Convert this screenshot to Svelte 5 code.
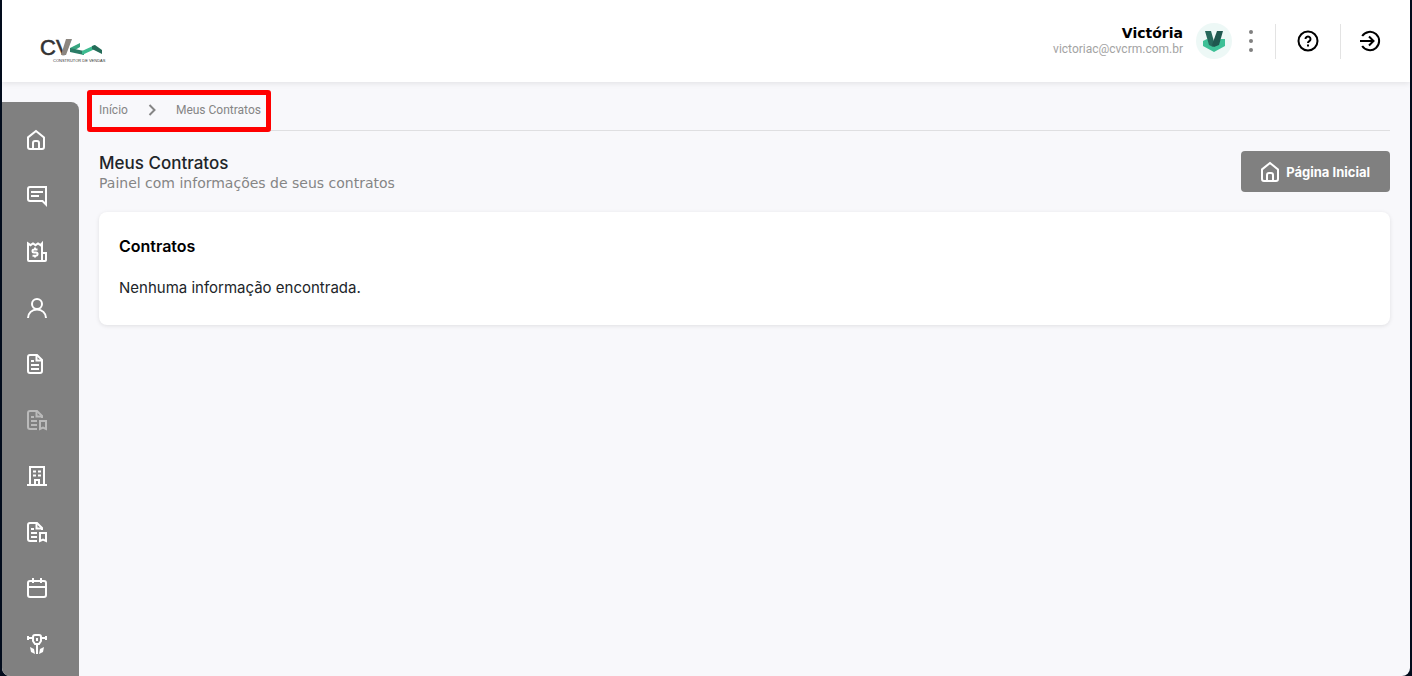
<script>
  const user = {
    name: 'Victória',
    email: 'victoriac@cvcrm.com.br',
  };

  const menu = [
    { id: 'home', label: 'Início' },
    { id: 'messages', label: 'Mensagens' },
    { id: 'finance', label: 'Financeiro' },
    { id: 'profile', label: 'Meus dados' },
    { id: 'documents', label: 'Documentos' },
    { id: 'contracts', label: 'Meus Contratos', active: true },
    { id: 'building', label: 'Empreendimentos' },
    { id: 'contracts', label: 'Termos' },
    { id: 'calendar', label: 'Agendamentos' },
    { id: 'works', label: 'Obras' },
  ];

  let contratos = $state([]);
</script>

{#snippet icon(id)}
  <svg class="icon" viewBox="0 0 20 20" width="20" height="20" aria-hidden="true">
    {#if id === 'home'}
      <path d="M1 7.4 9 1l8 6.4V17a2 2 0 0 1-2 2H3a2 2 0 0 1-2-2z" />
      <path d="M6 19v-6a2 2 0 0 1 2-2h2a2 2 0 0 1 2 2v6" />
    {:else if id === 'messages'}
      <path d="M19 18.5 15.5 15H3a2 2 0 0 1-2-2V3a2 2 0 0 1 2-2h16z" />
      <path d="M4 6h12M4 10h8" />
    {:else if id === 'finance'}
      <path d="M1 18V1.500l2.500 1.700L6 1.500l2.500 1.700L11 1.500l2.500 1.700L15 1.500V19H2a1 1 0 0 1-1-1z" />
      <path d="M15 11h4v7a1 1 0 0 1-1 1h-3" />
      <path d="M10.500 7.500H7a1.500 1.500 0 0 0 0 3h2a1.500 1.500 0 0 1 0 3.200H5.500M8 5.500v2M8 13.500v2" />
    {:else if id === 'profile'}
      <circle cx="10" cy="6" r="5" />
      <path d="M1 20c0-5 4-8.500 9-8.500s9 3.500 9 8.500" />
    {:else if id === 'documents'}
      <path d="M10 1H3a2 2 0 0 0-2 2v14a2 2 0 0 0 2 2h10a2 2 0 0 0 2-2V6z" />
      <path d="M9.500 1v5.500H15M4 7h3M4 11h8M4 15h8" />
    {:else if id === 'contracts'}
      <path d="M15 8V6l-5-5H3a2 2 0 0 0-2 2v14a2 2 0 0 0 2 2h7" />
      <path d="M9.500 1v5.500H15M4 7h3M4 11h6M4 15h6" />
      <path d="M13 19v-8h6v8l-3-1.500z" />
    {:else if id === 'building'}
      <path d="M0 19h20M3 19V1h14v18M8 19v-5h4v5" />
      <path d="M6 5.500h3M11 5.500h3M6 9.500h3M11 9.500h3" />
    {:else if id === 'calendar'}
      <rect x="1" y="3" width="18" height="16" rx="2" />
      <path d="M1 9h18M6 0v5M14 0v5" />
    {:else if id === 'works'}
      <path d="M0 4h6M14 4h6M1 2v4M19 2v4" />
      <path d="M6 3a2 2 0 0 1 2-2h4a2 2 0 0 1 2 2v4l-2 3H8L6 7zM10 4v3M10 10v10" />
      <path class="solid" d="M3 13l4 2 1 5-4-2zM17 13l-4 2-1 5 4-2z" />
    {/if}
  </svg>
{/snippet}

<div class="portal">
  <header class="topbar">
    <a class="brand" href="/" aria-label="CV Construtor de Vendas">
      <svg width="72" height="38" viewBox="-3 -6 72 38">
        <text class="brand-name" x="1" y="19">CV</text>
        <polygon points="27,3 33,3 27,19 22,19" fill="#8c8680" />
        <polygon points="41,7 41,11 36,14 31,16 31,12" fill="#37a580" />
        <polygon points="31,12 45,15 45,19 31,16" fill="#2a7c66" />
        <polygon points="43,15 56,9 56,13 43,19" fill="#3dbb90" />
        <polygon points="53,10 56,9 63,14 63,18 53,13" fill="#256c59" />
        <text class="brand-caption" x="14" y="26">CONSTRUTOR DE VENDAS</text>
      </svg>
    </a>

    <div class="account">
      <div class="user">
        <strong>{user.name}</strong>
        <span>{user.email}</span>
      </div>
      <svg class="avatar" width="36" height="36" viewBox="0 0 36 36" role="img" aria-label={user.name}>
        <circle cx="18" cy="18" r="18" fill="#edf8f6" />
        <polygon points="7,18 11,16 18,20 25,16 29,16 29,23 18,29 7,23" fill="#3dc096" />
        <polygon points="9,8 15,8 19,22 17,24 13,22" fill="#26685b" />
        <polygon points="21,8 27,8 23,22 18,24 16,22" fill="#1f574e" />
      </svg>
      <button class="more" type="button" aria-label="Mais opções">
        <svg width="6" height="24" viewBox="0 0 6 24">
          <circle cx="3" cy="3" r="2" /><circle cx="3" cy="12" r="2" /><circle cx="3" cy="21" r="2" />
        </svg>
      </button>
      <button class="action" type="button" aria-label="Ajuda">
        <svg class="icon" width="22" height="22" viewBox="0 0 22 22">
          <circle cx="11" cy="11" r="9.500" />
          <path d="M8.500 9a2.500 2.500 0 1 1 3.800 2.100c-.9.600-1.300.9-1.300 1.900M11 14.500v2" />
        </svg>
      </button>
      <button class="action" type="button" aria-label="Sair">
        <svg class="icon" width="22" height="22" viewBox="0 0 22 22">
          <path d="M3.200 6a9.200 9.200 0 1 1 0 10M1 11h13M10 6.500l4.500 4.500-4.500 4.500" />
        </svg>
      </button>
    </div>
  </header>

  <div class="body">
    <nav class="sidebar" aria-label="Menu">
      {#each menu as item}
        <a href="#{item.id}" class:active={item.active} aria-label={item.label}>
          {@render icon(item.id)}
        </a>
      {/each}
    </nav>

    <main>
      <nav class="breadcrumb" aria-label="Trilha">
        <div class="trail">
          <a href="/">Início</a>
          <svg class="icon" width="8" height="12" viewBox="0 0 8 12" aria-hidden="true">
            <path d="M1.500 1 6.500 6l-5 5" />
          </svg>
          <a href="#contracts">Meus Contratos</a>
        </div>
      </nav>

      <div class="heading">
        <div>
          <h1>Meus Contratos</h1>
          <p>Painel com informações de seus contratos</p>
        </div>
        <a class="home-button" href="/">
          {@render icon('home')}
          <span>Página Inicial</span>
        </a>
      </div>

      <section class="card">
        <h2>Contratos</h2>
        {#each contratos as contrato}
          <p>{contrato.nome}</p>
        {:else}
          <p>Nenhuma informação encontrada.</p>
        {/each}
      </section>
    </main>
  </div>
</div>

<style>
  :global(body) {
    margin: 0;
    background: #020c1c;
  }

  .portal {
    display: flex;
    flex-direction: column;
    box-sizing: border-box;
    min-height: 100vh;
    margin: 0 2px;
    overflow: hidden;
    border-radius: 0 0 8px 8px;
    background: #f8f8fb;
    color: #212529;
    font-family: Inter, 'Liberation Sans', sans-serif;
  }

  a {
    color: inherit;
    text-decoration: none;
  }

  button {
    padding: 0;
    border: 0;
    background: none;
    color: inherit;
    cursor: pointer;
  }

  svg {
    display: block;
    flex: none;
  }

  .icon {
    overflow: visible;
    fill: none;
    stroke: currentColor;
    stroke-width: 2;
  }

  .solid {
    fill: currentColor;
    stroke: none;
  }

  .topbar {
    display: flex;
    align-items: center;
    justify-content: space-between;
    height: 82px;
    padding: 0 19px 0 34px;
    background: #fff;
    box-shadow: 0 1px 6px rgba(0, 0, 0, 0.1);
  }

  .brand {
    padding-top: 16px;
  }

  .brand-name {
    fill: #333;
    stroke: #333;
    stroke-width: 0.6;
    font: 22px 'Liberation Sans', sans-serif;
  }

  .brand-caption {
    fill: #333;
    font: 4px 'Liberation Sans', sans-serif;
  }

  .account {
    display: flex;
    align-items: center;
    color: #000;
  }

  .user {
    display: flex;
    flex-direction: column;
    align-items: flex-end;
    margin-right: 13px;
  }

  .user strong {
    font: bold 14px/16px 'DejaVu Sans', sans-serif;
  }

  .user span {
    color: #a3a3a3;
    font: 12px/16px Roboto, sans-serif;
  }

  .more {
    margin: 0 21px 0 16px;
    fill: #808080;
  }

  .action {
    display: flex;
    align-items: center;
    justify-content: center;
    width: 65px;
    height: 35px;
    border-left: 1px solid #e3e3e3;
  }

  .action:last-child {
    justify-content: flex-end;
    width: 51px;
    padding-right: 10px;
  }

  .body {
    display: flex;
    flex: 1;
  }

  .sidebar {
    display: flex;
    flex-direction: column;
    width: 77px;
    margin-top: 20px;
    padding-top: 10px;
    box-sizing: border-box;
    border-radius: 0 8px 0 0;
    background: #808080;
    color: #fff;
  }

  .sidebar a {
    display: flex;
    align-items: center;
    height: 56px;
    padding-left: 25px;
  }

  .sidebar a.active {
    color: #bababa;
  }

  main {
    flex: 1;
    min-width: 0;
    padding: 8px 20px 20px;
  }

  .breadcrumb {
    display: flex;
    height: 40px;
    border-bottom: 1px solid #dfdfe1;
    color: #858585;
    font: 12px Roboto, sans-serif;
  }

  .trail {
    position: relative;
    display: flex;
    align-items: center;
    gap: 20px;
  }

  .trail::after {
    content: '';
    position: absolute;
    inset: 0 -10px -2px -12px;
    border: 5px solid #f00;
    border-radius: 3px;
    pointer-events: none;
  }

  .heading {
    display: flex;
    align-items: center;
    justify-content: space-between;
    margin: 20px 0;
  }

  h1 {
    margin: 0;
    font-size: 17px;
    font-weight: 500;
    line-height: 22px;
  }

  .heading p {
    margin: 0;
    color: #858585;
    font: 14px/18px 'DejaVu Sans', sans-serif;
  }

  .home-button {
    display: flex;
    align-items: center;
    gap: 5px;
    height: 41px;
    padding: 0 20px;
    border-radius: 4px;
    background: #808080;
    color: #fff;
    font-size: 13px;
    font-weight: 700;
  }

  .card {
    padding: 24px 20px 25px;
    border-radius: 8px;
    background: #fff;
    box-shadow: 0 1px 4px rgba(0, 0, 0, 0.1);
  }

  h2 {
    margin: 0 0 20px;
    color: #000;
    font-size: 16px;
    font-weight: 600;
    line-height: 20px;
  }

  .card p {
    margin: 0;
    font-size: 15px;
    line-height: 24px;
  }
</style>
